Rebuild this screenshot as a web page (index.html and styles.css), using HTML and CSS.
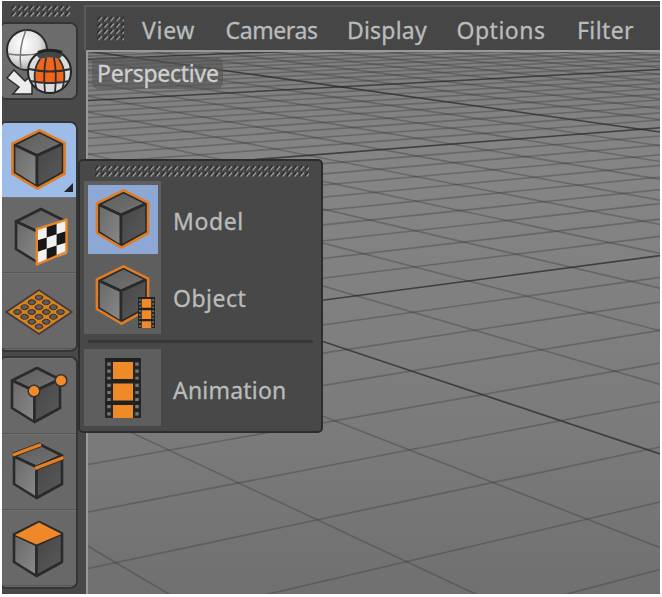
FILE: index.html
```html
<!DOCTYPE html>
<html lang="en">
<head>
<meta charset="utf-8">
<title>Perspective viewport</title>
<link rel="stylesheet" href="styles.css">
</head>
<body>
<svg class="defs" aria-hidden="true">
  <defs>
    <linearGradient id="gTop" x1="0" y1="0" x2="1" y2="1"><stop offset="0" stop-color="#5c5c5c"/><stop offset="1" stop-color="#747474"/></linearGradient>
    <linearGradient id="gLeft" x1="0" y1="0" x2="1" y2="1"><stop offset="0" stop-color="#686868"/><stop offset="1" stop-color="#8a8a8a"/></linearGradient>
    <linearGradient id="gRight" x1="0" y1="0" x2="1" y2="1"><stop offset="0" stop-color="#464646"/><stop offset="1" stop-color="#5a5a5a"/></linearGradient>
    <radialGradient id="gBall" cx=".4" cy=".35" r=".65"><stop offset="0" stop-color="#fff"/><stop offset=".6" stop-color="#e4e4e4"/><stop offset="1" stop-color="#aaa"/></radialGradient>
    <pattern id="grip" width="6" height="6.3" patternUnits="userSpaceOnUse"><path d="M0 4.6 3.4 0.8" stroke="#2b2b2b" stroke-width="2"/><path d="M1.4 5.2 5 1.4" stroke="#a0a0a0" stroke-width="1.3"/></pattern>
    <symbol id="cube" viewBox="0 0 54 60">
      <g stroke="#2a2a2a" stroke-width="2.6" stroke-linejoin="round">
        <path d="M28 3 51 14.5 25.5 26 3 15.5Z" fill="url(#gTop)"/>
        <path d="M3 15.5 25.5 26V57L3 43Z" fill="url(#gLeft)"/>
        <path d="M51 14.5 25.5 26V57L51 43Z" fill="url(#gRight)"/>
      </g>
    </symbol>
    <symbol id="cubeSel" viewBox="0 0 54 60">
      <use href="#cube" width="54" height="60"/>
      <path d="M28 1.4 52.6 13.6V44L26 58.6 1.4 44V14.4Z" fill="none" stroke="#df7c25" stroke-width="2.6" stroke-linejoin="round"/>
    </symbol>
    <symbol id="film" viewBox="0 0 36 60">
      <path d="M0 0H36V60H0Z" fill="#262626"/>
      <path d="M8 4H28V21H8ZM8 25.500H28V42.500H8ZM8 47H28V60H8Z" fill="#ee8a28"/>
      <path d="M4 4.500V60M32 4.500V60" stroke="#777" stroke-width="3.400" stroke-dasharray="3.200 3.900"/>
      <path d="M0 1.500H36M0 23.300H36M0 44.800H36" stroke="#202020" stroke-width="3.500"/>
    </symbol>
  </defs>
</svg>

<main class="app">
  <aside class="toolbar">
    <svg class="grip grip-tool" width="60" height="13"><rect width="60" height="13" fill="url(#grip)"/></svg>

    <div class="group convert">
      <button class="tool" aria-label="Make editable">
        <svg width="74" height="75" viewBox="0 0 74 75">
          <circle cx="25" cy="26" r="20" fill="url(#gBall)" stroke="#2a2a2a" stroke-width="2"/>
          <path d="M24 6Q16 25 19 45M6 30Q24 33 45 28" fill="none" stroke="#777" stroke-width="1.500"/>
          <path d="M5 54 12 46 23 57 30 51V70H11L17 63Z" fill="#ececec" stroke="#2b2b2b" stroke-width="1.500"/>
          <circle cx="47.500" cy="47.500" r="21.500" fill="#dcdcdc" stroke="#252525" stroke-width="2"/>
          <path d="M38 35Q47.500 32 57 35Q62 45 63 57Q48 60 32 57Q33 45 38 35Z" fill="#f0651a"/>
          <path d="M34 31Q47.500 20 61 31L57 35Q47.500 32 38 35Z" fill="#454545"/>
          <path d="M27 45Q48 50 69 45M28 57Q48 61 68 57M44 34Q41 49 43 68M52 34Q55 49 53 68M38 35Q29 48 35 66M57 35Q66 48 60 66" fill="none" stroke="#303030" stroke-width="1.800"/>
          <path d="M36 28.500Q48 24 60 28.500" fill="none" stroke="#222" stroke-width="3"/>
        </svg>
      </button>
    </div>

    <div class="group modes">
      <button class="tool active" aria-label="Model mode">
        <svg width="74" height="75" viewBox="0 0 74 75"><use href="#cubeSel" x="9" y="6" width="55" height="61"/><path d="M62 69 71 60V69Z" fill="#262626"/></svg>
      </button>
      <button class="tool" aria-label="Texture mode">
        <svg width="74" height="75" viewBox="0 0 74 75">
          <use href="#cube" x="11" y="8" width="54" height="60"/>
          <g transform="matrix(9.900 -3.200 0 11.400 34.800 31.200)">
            <path d="M0 0H3V3H0Z" fill="#f2f2f2"/>
            <path d="M1 0H2V1H1ZM0 1H1V2H0ZM2 1H3V2H2ZM1 2H2V3H1Z" fill="#181818"/>
          </g>
          <path d="M34.800 31.200 64.500 21.600V54L34.800 66.500Z" fill="none" stroke="#e98427" stroke-width="2.400" stroke-linejoin="round"/>
        </svg>
      </button>
      <button class="tool" aria-label="Workplane mode">
        <svg width="74" height="75" viewBox="0 0 74 75">
          <g transform="matrix(6.540 4.400 -6.540 4.400 37 16)">
            <path d="M0 0H5V5H0Z" fill="#d88022" stroke="#3b3b3b" stroke-width=".24"/>
            <g fill="#5c5c5c" stroke="#40342a" stroke-width=".14" id="holes"></g>
          </g>
        </svg>
      </button>
    </div>

    <div class="group modes components">
      <button class="tool" aria-label="Points mode">
        <svg width="74" height="75" viewBox="0 0 74 75">
          <use href="#cube" x="7" y="6" width="54" height="60"/>
          <g fill="#f38b2b" stroke="#333" stroke-width="1.500"><circle cx="32" cy="32" r="5.800"/><circle cx="59" cy="21.500" r="5.800"/></g>
        </svg>
      </button>
      <button class="tool" aria-label="Edges mode">
        <svg width="74" height="75" viewBox="0 0 74 75">
          <use href="#cube" x="9" y="6" width="54" height="60"/>
          <path d="M11 20 39 9.500M33 33.500 61.500 22.500" stroke="#3a2a1c" stroke-width="5"/>
          <path d="M11 20 39 9.500M33 33.500 61.500 22.500" stroke="#e28228" stroke-width="3.200"/>
        </svg>
      </button>
      <button class="tool" aria-label="Polygons mode">
        <svg width="74" height="75" viewBox="0 0 74 75">
          <use href="#cube" x="9" y="8" width="54" height="60"/>
          <path d="M37 11.500 59.500 23 34.500 33.500 13 24Z" fill="#ee8828"/>
        </svg>
      </button>
    </div>
  </aside>

  <section class="view">
    <nav class="menu">
      <svg class="grip grip-menu" width="27" height="26"><rect width="27" height="26" fill="url(#grip)"/></svg>
      <span class="m-view">View</span><span class="m-cameras">Cameras</span><span class="m-display">Display</span><span class="m-options">Options</span><span class="m-filter">Filter</span>
    </nav>
    <div class="viewport">
      <svg class="floor" id="floor" width="572" height="543" viewBox="88 51 572 543"></svg>
      <span class="label">Perspective</span>
    </div>
  </section>

  <div class="popup">
    <svg class="grip grip-popup" width="214" height="13"><rect width="214" height="13" fill="url(#grip)"/></svg>
    <div class="choices">
      <div class="choice first">
        <div class="cell"><div class="icon picked"><svg width="55" height="60"><use href="#cubeSel" width="55" height="60"/></svg></div></div>
        <span class="t-model">Model</span>
      </div>
      <div class="choice">
        <div class="cell"><div class="icon"><svg width="62" height="66"><use href="#cubeSel" width="55" height="60"/><svg x="43" y="32" width="17" height="31" preserveAspectRatio="none" viewBox="0 0 36 60"><use href="#film" width="36" height="60"/></svg></svg></div></div>
        <span class="t-object">Object</span>
      </div>
    </div>
    <hr>
    <div class="choice last">
      <div class="cell"><svg class="reel" width="36" height="60"><use href="#film" width="36" height="60"/></svg></div>
      <span class="t-animation">Animation</span>
    </div>
  </div>
</main>
<script src="floor.js"></script>
</body>
</html>
```
FILE: styles.css
```css
* { box-sizing: border-box; }

body {
  margin: 0;
  width: 662px;
  height: 597px;
  padding: 1px 2px 3px;
  background: #fff;
  overflow: hidden;
  font-family: "Noto Sans", "Open Sans", sans-serif;
  font-size: 23px;
  color: #b9bcbc;
}

.defs { position: absolute; width: 0; height: 0; }
svg { display: block; }
span { white-space: nowrap; -webkit-text-stroke: .3px currentColor; }

.app {
  position: relative;
  display: flex;
  width: 658px;
  height: 593px;
  background: #484848;
  overflow: hidden;
}

.toolbar {
  flex: none;
  width: 82px;
  padding-top: 4px;
}

.grip-tool { margin-left: 9px; }

.group {
  width: 74px;
  border-radius: 4px 6px 6px 4px;
  background: #686868;
  box-shadow: 0 0 0 2px #353535;
  overflow: hidden;
}

.convert { margin-top: 6px; height: 74px; }
.modes { margin-top: 25px; height: 227px; }
.components { margin-top: 8px; height: 229px; }

.tool {
  display: block;
  width: 74px;
  height: 76px;
  margin: 0;
  padding: 0;
  border: 0;
  border-top: 1px solid #707070;
  border-bottom: 1px solid #555;
  background: #686868;
}

.convert .tool { background: #6c6c6c; border: 0; height: 74px; }
.tool.active { height: 74px; border: 0; background: #9dbde8; }

.view {
  flex: 1;
  display: flex;
  flex-direction: column;
  min-width: 0;
  padding-top: 4px;
}

.menu {
  display: flex;
  align-items: center;
  height: 45px;
  padding: 5px 0 0 11px;
  border-top: 2px solid #5b5b5b;
  border-left: 2px solid #5b5b5b;
  background: #464646;
}

.menu > * { flex: none; }
.grip-menu { margin: 0 18px 4px 0; }
.menu span { margin: -2px 30.5px 0 0; line-height: 30px; }
.m-view { width: 53px; letter-spacing: .7px; }
.m-cameras { width: 91px; letter-spacing: -.4px; }
.m-display { width: 79px; letter-spacing: .2px; }
.m-options { width: 90px; letter-spacing: .5px; }
.m-filter { letter-spacing: .4px; }

.viewport {
  position: relative;
  height: 545px;
  border-top: 2px solid #999;
  border-left: 2px solid #999;
  margin-left: 2px;
  overflow: hidden;
  background: linear-gradient(#7f7f7f, #858585 22%, #7b7b7b 70%, #707070);
}

.floor { position: absolute; left: 0; top: 0; }
.floor line { stroke: #383838; stroke-width: 1.6; stroke-opacity: .36; }
.floor .major { stroke: #222; stroke-width: 1.6; stroke-opacity: .7; }

.label {
  position: absolute;
  left: 4px;
  top: 5px;
  width: 131px;
  height: 32px;
  padding-left: 5px;
  border-radius: 6px;
  background: rgba(85, 85, 85, .62);
  color: #d0d0d0;
  line-height: 33px;
  letter-spacing: -.25px;
}

.popup {
  position: absolute;
  left: 76px;
  top: 158px;
  width: 245px;
  height: 274px;
  padding: 4px 0 0 4px;
  border: 2px solid #2d2d2d;
  border-radius: 5px;
  background: #484848;
}

.grip-popup { margin-left: 11px; }
.choices { margin-top: 3px; }
.choice { display: flex; align-items: center; height: 77px; }
.choice span { margin-top: 4px; }
.choice.first { height: 76px; }
.choice.last { height: 77px; }
.t-model { letter-spacing: .6px; }
.t-object { letter-spacing: .5px; }
.t-animation { letter-spacing: .2px; }

.cell {
  display: flex;
  align-items: center;
  justify-content: center;
  width: 77px;
  height: 100%;
  margin-right: 12px;
  background: #5e5e5e;
}

.icon { width: 70px; height: 69px; padding: 4px 0 0 7px; }
.picked { background: #8da8d4; }

hr {
  width: 225px;
  height: 3px;
  margin: 6px 0 6px 4px;
  border: 0;
  background: #383838;
}
```
FILE: floor.js
```js
// Ground plane: known grid nodes [a, b, x, y] define the camera projection.
const nodes = [
  [-10, -24, 337, 86], [-10, -14, 638, 127],
  [0, 0, 483, 393.5], [0, 1, 560, 420], [0, -1, 411, 370],
  [1, 0, 335, 420], [1, 1, 408, 448.7], [1, 2, 492, 482], [1, 3, 585, 518.5],
  [2, 0, 170, 449], [2, 1, 237, 482], [2, 2, 317, 519], [2, 3, 406, 560],
  [3, 2, 115, 561], [-1, 0, 617, 370], [-1, -1, 545, 349], [-1, -2, 475, 329],
  [-1, -3, 413, 311.5], [-1, -4, 363, 296]
];

function solveProjection(points) {
  const m = Array.from({ length: 8 }, () => new Array(9).fill(0));
  for (const [a, b, x, y] of points) {
    const rows = [[a, b, 1, 0, 0, 0, -a * x, -b * x, x], [0, 0, 0, a, b, 1, -a * y, -b * y, y]];
    const w = 1 / (1 - 0.07 * a - 0.05 * b);
    for (const r of rows)
      for (let i = 0; i < 8; i++)
        for (let j = 0; j < 9; j++) m[i][j] += w * w * r[i] * r[j];
  }
  for (let c = 0; c < 8; c++) {
    let p = c;
    for (let r = c + 1; r < 8; r++) if (Math.abs(m[r][c]) > Math.abs(m[p][c])) p = r;
    [m[c], m[p]] = [m[p], m[c]];
    for (let r = 0; r < 8; r++) {
      if (r === c) continue;
      const f = m[r][c] / m[c][c];
      for (let k = c; k < 9; k++) m[r][k] -= f * m[c][k];
    }
  }
  return m.map((r, i) => r[8] / r[i]);
}

const h = solveProjection(nodes);
const floor = document.getElementById("floor");
const NS = "http://www.w3.org/2000/svg";

function project(a, b) {
  const w = h[6] * a + h[7] * b + 1;
  return [(h[0] * a + h[1] * b + h[2]) / w, (h[3] * a + h[4] * b + h[5]) / w];
}

function addLine(p, q, major) {
  const l = document.createElementNS(NS, "line");
  l.setAttribute("x1", p[0]); l.setAttribute("y1", p[1]);
  l.setAttribute("x2", q[0]); l.setAttribute("y2", q[1]);
  if (major) l.setAttribute("class", "major");
  floor.appendChild(l);
}

const FAR = -60, NEAR = 0.08;
for (let a = FAR; a <= 4; a++) {
  const end = Math.min(60, (NEAR - 1 - h[6] * a) / h[7]);
  if (end > FAR) addLine(project(a, FAR), project(a, end), a % 10 === 0);
}
for (let b = FAR; b <= 8; b++) {
  const end = Math.min(60, (NEAR - 1 - h[7] * b) / h[6]);
  if (end > FAR) addLine(project(FAR, b), project(end, b), (b + 4) % 10 === 0);
}

// Perforations of the workplane icon.
const holes = document.getElementById("holes");
for (let i = 0; i < 4; i++)
  for (let j = 0; j < 4; j++) {
    const c = document.createElementNS(NS, "circle");
    c.setAttribute("cx", 0.85 + i * 1.1);
    c.setAttribute("cy", 0.85 + j * 1.1);
    c.setAttribute("r", 0.38);
    holes.appendChild(c);
  }
```
